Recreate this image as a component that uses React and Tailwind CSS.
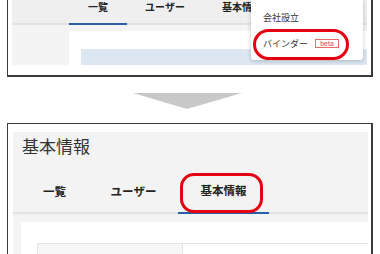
export default function App() {
  const font = { fontFamily: '"Noto Sans CJK JP", "Noto Sans", sans-serif' };
  return (
    <div className="relative w-[380px] h-[254px] overflow-hidden bg-white flex flex-col" style={font}>
      {/* top frame */}
      <div className="ml-[7px] w-[366px] h-[77px] shrink-0 border-l border-r-2 border-b-2 border-[#3a3a3a] px-[4px] flex flex-col">
        <div className="flex h-[25px] bg-[#efefef] border-b-2 border-[#e2e2e2] pl-[57px] text-[10px] font-bold text-[#222]">
          <div className="w-[58px] h-[25px] shrink-0 border-b-2 border-[#2a5fa8] text-center leading-[13px]">一覧</div>
          <div className="w-[76px] h-[25px] shrink-0 text-center leading-[13px]">ユーザー</div>
          <div className="pl-[19px] h-[25px] leading-[13px]">基本情報</div>
        </div>
        <div className="flex h-[40px] bg-[#f4f4f4]">
          <div className="w-[57px] shrink-0" />
          <div className="flex-1 pt-[6px] flex flex-col">
            <div className="flex-1 bg-white pt-[18px] pl-[12px] flex flex-col">
              <div className="h-[16px] bg-[#dce7f2]" />
            </div>
          </div>
        </div>
      </div>

      {/* arrow */}
      <div className="h-[46px] shrink-0 pl-[133px] pt-[16px]">
        <svg width="109" height="16" viewBox="0 0 109 16" className="block">
          <polygon points="0,0 109,0 54,16" fill="#c8c8c8" />
        </svg>
      </div>

      {/* bottom frame */}
      <div className="ml-[7px] w-[366px] flex-1 border-l border-t border-r-2 border-[#3a3a3a] pl-[5px] pr-[3px] pt-[8px] flex flex-col">
        <div className="bg-[#f3f3f3]">
          <div className="h-[38px] pt-[4px] pl-[9px] text-[17px] leading-[20px] text-[#333]">基本情報</div>
          <div className="flex h-[44px] border-b-2 border-[#e2e2e2] pl-[7px] text-[11.5px] font-bold text-[#222]">
            <div className="w-[69px] h-[44px] shrink-0 flex items-center justify-center">一覧</div>
            <div className="w-[89px] h-[44px] shrink-0 flex items-center justify-center">ユーザー</div>
            <div className="w-[91px] h-[44px] shrink-0 flex items-center justify-center border-b-2 border-[#2a5fa8]">基本情報</div>
          </div>
        </div>
        <div className="flex-1 bg-[#f4f4f4] pt-[8px] pl-[8px] flex flex-col">
          <div className="flex-1 bg-white pt-[21px] pl-[16px] flex">
            <div className="w-[146px] h-[20px] bg-[#f6f6f6] border border-[#e3e3e3]" />
            <div className="flex-1 h-[20px] border-t border-[#e3e3e3]" />
          </div>
        </div>
      </div>

      {/* dropdown overlay */}
      <div className="absolute left-[251px] top-0 w-[112px] h-[60px] bg-white rounded-b-[3px] shadow-[0_1px_4px_rgba(0,0,0,0.22)] pl-[12px] text-[9px] text-[#333] leading-[13px]">
        <div className="pt-[11px]">会社設立</div>
        <div className="mt-[13px] flex items-center">
          <span>バインダー</span>
          <span className="ml-[7px] w-[24px] h-[9px] border border-[#e56a6a] text-[#e04848] text-[7px] leading-[7px] flex items-center justify-center" style={{ fontFamily: '"Liberation Sans", sans-serif' }}>beta</span>
        </div>
      </div>

      {/* red highlights */}
      <div className="absolute left-[253px] top-[29px] w-[96px] h-[31px] border-[3px] border-[#e50012] rounded-[16px]" />
      <div className="absolute left-[180px] top-[173px] w-[83px] h-[40px] border-[3px] border-[#e50012] rounded-[14px]" />
    </div>
  );
}
